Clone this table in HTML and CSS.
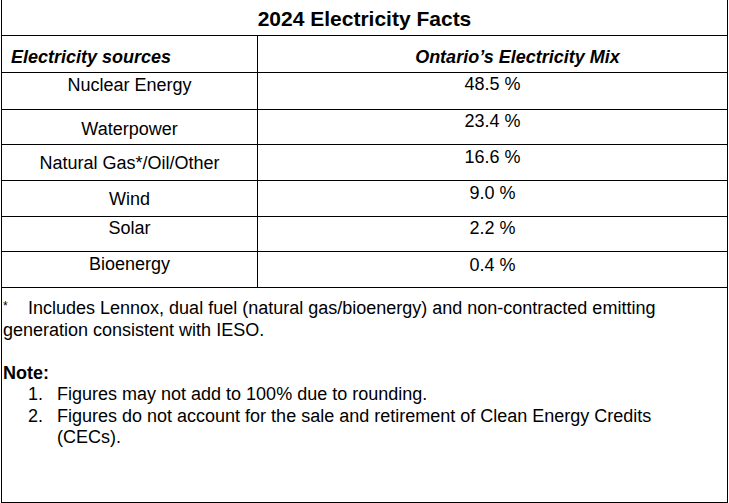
FILE: index.html
```html
<!DOCTYPE html>
<html lang="en">
<head>
<meta charset="utf-8">
<title>2024 Electricity Facts</title>
<link rel="stylesheet" href="styles.css">
</head>
<body>
<div class="sheet">
  <div class="title">2024 Electricity Facts</div>
  <div class="grid">
    <div class="cell head left-col"><span class="hl">Electricity sources</span></div>
    <div class="cell head right-col"><span class="hr">Ontario’s Electricity Mix</span></div>

    <div class="cell src r-nuc">Nuclear Energy</div>
    <div class="cell val v-nuc">48.5 %</div>

    <div class="cell src r-wat">Waterpower</div>
    <div class="cell val v-wat">23.4 %</div>

    <div class="cell src r-gas">Natural Gas*/Oil/Other</div>
    <div class="cell val v-gas">16.6 %</div>

    <div class="cell src r-win">Wind</div>
    <div class="cell val v-win">9.0 %</div>

    <div class="cell src r-sol">Solar</div>
    <div class="cell val v-sol">2.2 %</div>

    <div class="cell src r-bio">Bioenergy</div>
    <div class="cell val v-bio">0.4 %</div>
  </div>
  <div class="foot">
    <p class="fn"><span class="star">*</span>Includes Lennox, dual fuel (natural gas/bioenergy) and non-contracted emitting<br>generation consistent with IESO.</p>
    <p class="note">Note:</p>
    <ol class="notes">
      <li><span class="num">1.</span><span class="txt">Figures may not add to 100% due to rounding.</span></li>
      <li><span class="num">2.</span><span class="txt">Figures do not account for the sale and retirement of Clean Energy Credits<br>(CECs).</span></li>
    </ol>
  </div>
</div>
</body>
</html>
```

FILE: styles.css
```css
html, body {
  margin: 0;
  padding: 0;
  background: #fff;
}

body {
  font-family: "Liberation Sans", Arial, sans-serif;
  font-size: 18px;
  line-height: 21px;
  color: #000;
}

.sheet {
  box-sizing: border-box;
  margin-left: 1px;
  width: 727px;
  height: 503px;
  border-left: 1px solid #000;
  border-right: 1px solid #000;
  border-bottom: 1px solid #000;
  display: flex;
  flex-direction: column;
}

.title {
  box-sizing: border-box;
  height: 36px;
  border-bottom: 1px solid #000;
  text-align: center;
  font-weight: bold;
  font-size: 21px;
  line-height: 24px;
  padding-top: 7px;
}

.grid {
  display: grid;
  grid-template-columns: 256px 1fr;
  grid-template-rows: 37px 37px 35px 36px 36px 35px 36px;
}

.cell {
  box-sizing: border-box;
  border-bottom: 1px solid #000;
}

.grid > .cell:nth-child(odd) {
  border-right: 1px solid #000;
}

.head {
  font-weight: bold;
  font-style: italic;
  padding-top: 11px;
}

.left-col {
  padding-left: 9px;
}

.right-col {
  text-align: center;
  padding-left: 50px;
}

.src, .val {
  text-align: center;
}

.r-nuc { padding-top: 2px; }
.v-nuc { padding-top: 1px; }
.r-wat { padding-top: 9px; }
.v-wat { padding-top: 1px; }
.r-gas { padding-top: 8px; }
.v-gas { padding-top: 2px; }
.r-win { padding-top: 8px; }
.v-win { padding-top: 2px; }
.r-sol { padding-top: 1px; }
.v-sol { padding-top: 1px; }
.r-bio { padding-top: 2px; }
.v-bio { padding-top: 3px; }

.foot {
  flex: 1;
  padding: 10px 0 0 1px;
  line-height: 21.5px;
}

.foot p {
  margin: 0;
}

.star {
  display: inline-block;
  width: 25px;
  font-size: 12px;
  vertical-align: top;
  line-height: 16px;
}

.fn {
  margin-bottom: 21.5px !important;
}

.note {
  font-weight: bold;
}

.notes {
  list-style: none;
  margin: 0;
  padding: 0 0 0 25px;
}

.notes li {
  display: flex;
}

.num {
  flex: 0 0 29px;
}

.txt {
  flex: 1;
}
```
